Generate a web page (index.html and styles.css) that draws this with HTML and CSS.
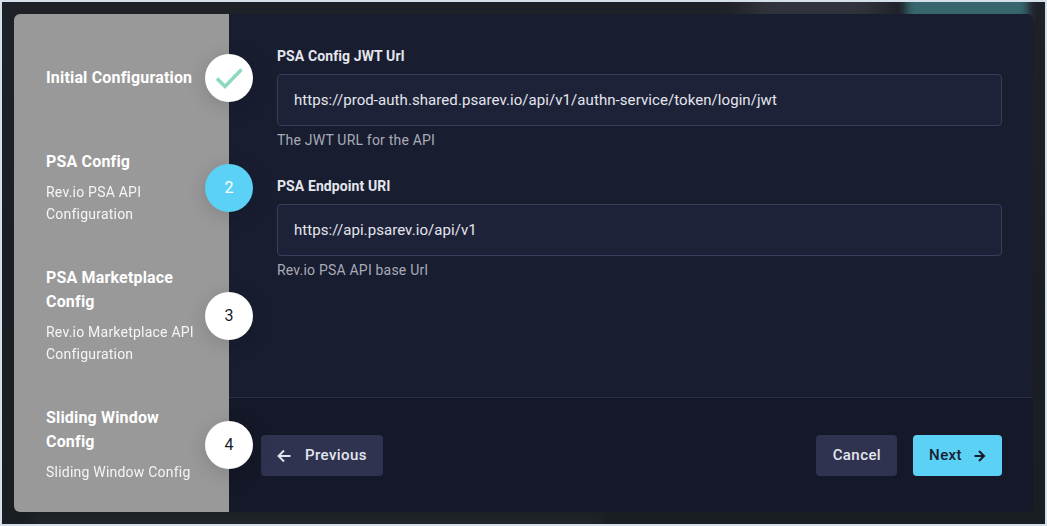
FILE: index.html
```html
<!DOCTYPE html>
<html lang="en">
<head>
    <meta charset="UTF-8">
    <title>Configuration</title>
    <link rel="stylesheet" href="styles.css">
</head>
<body>
    <div class="backdrop">
        <div class="glow glow-gray"></div>
        <div class="glow glow-teal"></div>
        <div class="glow glow-bottom"></div>

        <div class="modal">
            <div class="steps">
                <div class="step step-first">
                    <div class="step-text">
                        <h3>Initial Configuration</h3>
                    </div>
                    <div class="step-circle">
                        <svg width="32" height="32" viewBox="0 0 32 32" fill="none">
                            <path d="M4 16.5 L12 24.5 L28.5 7.5" stroke="#8ed8c3" stroke-width="3.6"/>
                        </svg>
                    </div>
                </div>
                <div class="step">
                    <div class="step-text">
                        <h3>PSA Config</h3>
                        <p>Rev.io PSA API Configuration</p>
                    </div>
                    <div class="step-circle active">2</div>
                </div>
                <div class="step">
                    <div class="step-text">
                        <h3>PSA Marketplace Config</h3>
                        <p>Rev.io Marketplace API Configuration</p>
                    </div>
                    <div class="step-circle">3</div>
                </div>
                <div class="step">
                    <div class="step-text">
                        <h3>Sliding Window Config</h3>
                        <p>Sliding Window Config</p>
                    </div>
                    <div class="step-circle">4</div>
                </div>
            </div>

            <div class="main">
                <div class="form">
                    <div class="field">
                        <label>PSA Config JWT Url</label>
                        <input class="input" type="text" value="https://prod-auth.shared.psarev.io/api/v1/authn-service/token/login/jwt">
                        <div class="hint">The JWT URL for the API</div>
                    </div>
                    <div class="field">
                        <label>PSA Endpoint URl</label>
                        <input class="input" type="text" value="https://api.psarev.io/api/v1">
                        <div class="hint">Rev.io PSA API base Url</div>
                    </div>
                </div>

                <div class="footer">
                    <button class="btn btn-dark btn-prev">
                        <svg width="14" height="14" viewBox="0 0 14 14" fill="none" stroke="currentColor" stroke-width="1.9">
                            <path d="M13.5 7 H2 M7 1.5 L1.5 7 L7 12.5"/>
                        </svg>
                        Previous
                    </button>
                    <div class="footer-right">
                        <button class="btn btn-dark btn-cancel">Cancel</button>
                        <button class="btn btn-primary">
                            Next
                            <svg width="12" height="12" viewBox="0 0 12 12" fill="none" stroke="currentColor" stroke-width="2">
                                <path d="M0.5 6 H9.5 M5 1 L10 6 L5 11"/>
                            </svg>
                        </button>
                    </div>
                </div>
            </div>
        </div>
    </div>
</body>
</html>
```

FILE: styles.css
```css
html, body {
    height: 100%;
}

body {
    margin: 0;
    background: #d5e0ea;
    padding: 2px;
    box-sizing: border-box;
    font-family: Roboto, sans-serif;
    overflow: hidden;
}

.backdrop {
    position: relative;
    height: 100%;
    padding: 12px;
    box-sizing: border-box;
    background: linear-gradient(180deg, #1f2129, #1b1f25 50%, #191e22);
    overflow: hidden;
}

.glow {
    position: absolute;
}

.glow-gray {
    top: -10px;
    left: 745px;
    width: 135px;
    height: 30px;
    background: #393a44;
    filter: blur(14px);
}

.glow-teal {
    top: -10px;
    left: 904px;
    width: 122px;
    height: 30px;
    background: #37666f;
    filter: blur(4px);
}

.glow-bottom {
    bottom: -6px;
    left: 30px;
    width: 570px;
    height: 14px;
    background: #22272b;
    filter: blur(6px);
}

.modal {
    position: relative;
    display: flex;
    height: 100%;
    border-radius: 6px;
    overflow: hidden;
}

/* Stepper */
.steps {
    width: 215px;
    flex-shrink: 0;
    padding-top: 32px;
    box-sizing: border-box;
    display: flex;
    flex-direction: column;
    gap: 39px;
    background: #999;
}

.step {
    position: relative;
    display: flex;
    align-items: center;
    padding-left: 32px;
}

.step-first {
    min-height: 64px;
}

.step-text {
    width: 150px;
    padding-top: 1px;
}

.step-first .step-text {
    padding-top: 0;
}

.step-text h3 {
    margin: 0;
    color: #fff;
    font-size: 16px;
    font-weight: 700;
    line-height: 24px;
    letter-spacing: 0.17px;
}

.step-text p {
    margin: 7px 0 1px;
    color: #fff;
    font-size: 14px;
    line-height: 22px;
    letter-spacing: 0.22px;
    opacity: 0.9;
}

.step-circle {
    position: absolute;
    right: -24px;
    top: 50%;
    z-index: 2;
    width: 48px;
    height: 48px;
    margin-top: -24px;
    display: flex;
    align-items: center;
    justify-content: center;
    border-radius: 50%;
    background: #fff;
    color: #181c2e;
    font-size: 16px;
    box-shadow: 0 4px 20px rgba(0,0,0,0.15);
}

.step-circle.active {
    background: #5ad1f5;
    color: #fff;
}

/* Form */
.main {
    flex: 1;
    display: flex;
    flex-direction: column;
    background: #181d30;
}

.form {
    flex: 1;
    padding: 34px 31px 0 48px;
}

.field {
    margin-bottom: 29px;
}

.field label {
    display: block;
    margin-bottom: 9px;
    color: #e4e6ee;
    font-size: 14px;
    font-weight: 700;
    line-height: 17px;
    letter-spacing: 0.1px;
}

.input {
    display: block;
    width: 100%;
    height: 52px;
    padding: 0 16px;
    box-sizing: border-box;
    background: #1e2238;
    border: 1px solid #3a3d5c;
    border-radius: 4px;
    color: #e4e6ee;
    font-family: inherit;
    font-size: 15px;
    letter-spacing: 0.07px;
    outline: none;
}

.hint {
    margin-top: 6px;
    color: #a8abb8;
    font-size: 14px;
    line-height: 17px;
    letter-spacing: 0.2px;
}

.footer {
    height: 115px;
    display: flex;
    align-items: flex-start;
    justify-content: space-between;
    padding: 37px 31px 0 32px;
    box-sizing: border-box;
    background: #151828;
    border-top: 1px solid #2a2e45;
}

.footer-right {
    display: flex;
    gap: 16px;
}

.btn {
    height: 41px;
    display: flex;
    align-items: center;
    gap: 12px;
    padding: 0 16px 2px;
    border: none;
    border-radius: 4px;
    font-family: inherit;
    font-size: 15px;
    font-weight: 500;
    letter-spacing: 0.42px;
    cursor: pointer;
}

.btn svg {
    position: relative;
    top: 1px;
}

.btn-dark {
    background: #2f3350;
    color: #e4e6ee;
}

.btn-prev {
    gap: 14px;
}

.btn-cancel {
    padding-left: 17px;
}

.btn-primary {
    background: #5ad1f5;
    color: #181c2e;
}
```
